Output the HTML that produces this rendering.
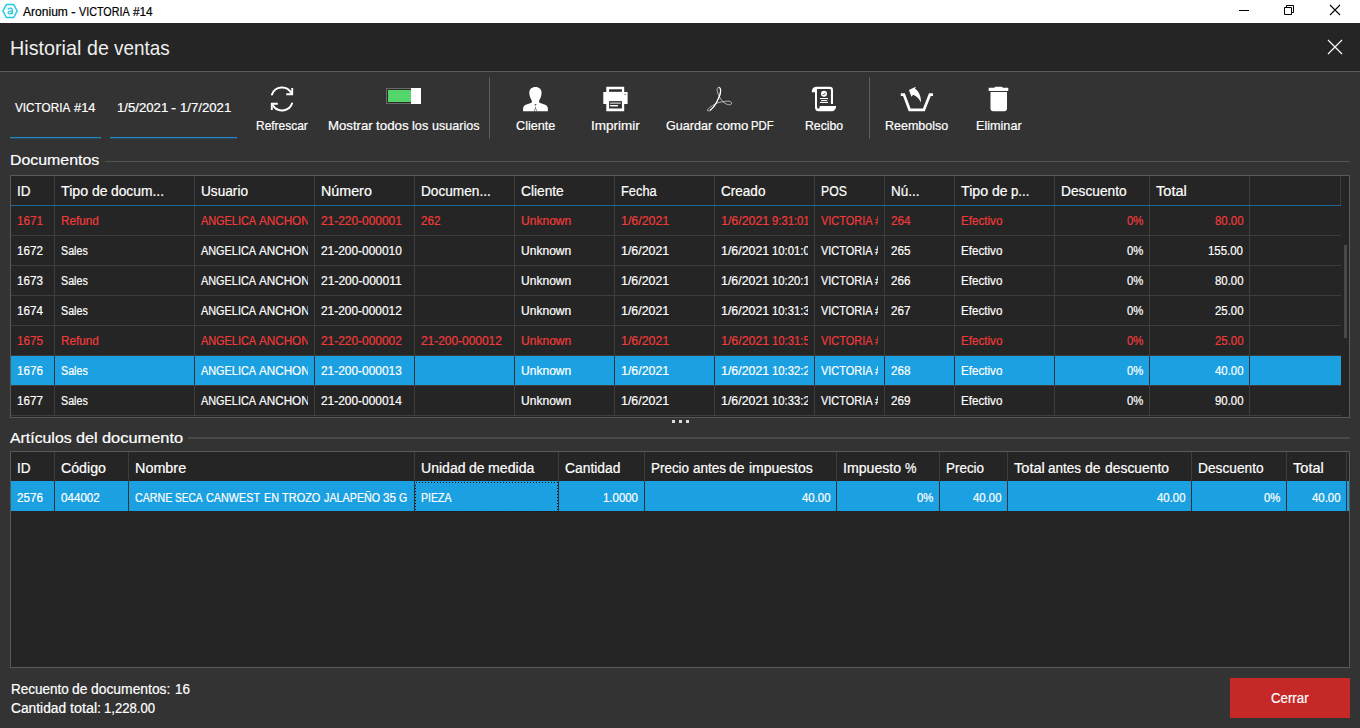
<!DOCTYPE html>
<html><head><meta charset="utf-8"><title>Aronium - VICTORIA #14</title>
<style>
html,body{margin:0;padding:0;background:#333;}
body{width:1360px;height:728px;position:relative;overflow:hidden;font-family:"Liberation Sans",sans-serif;}
.t{position:absolute;white-space:nowrap;line-height:1;transform-origin:0 0;display:block;-webkit-text-stroke:0.2px currentColor;}
.r{position:absolute;box-sizing:border-box;}
.clip{position:absolute;overflow:hidden;}
svg{position:absolute;overflow:visible;}
</style></head><body>
<div class="r" style="left:0px;top:0px;width:1360px;height:23px;background:#ffffff;"></div>
<span class="t" style="left:23.30px;top:6.04px;font-size:12px;color:#000;transform:scaleX(1.0046);">Aronium</span>
<span class="t" style="left:71.41px;top:6.04px;font-size:12px;color:#000;transform:scaleX(1.1782);">-</span>
<span class="t" style="left:79.35px;top:6.04px;font-size:12px;color:#000;transform:scaleX(0.8953);">VICTORIA</span>
<span class="t" style="left:133.12px;top:6.04px;font-size:12px;color:#000;transform:scaleX(0.9820);">#14</span>
<div class="r" style="left:0px;top:23px;width:1360px;height:48px;background:#252525;"></div>
<div class="r" style="left:0px;top:71px;width:1360px;height:1px;background:#585d56;"></div>
<span class="t" style="left:10.20px;top:38.09px;font-size:20.8px;color:#efefef;transform:scaleX(0.9506);-webkit-text-stroke:0;">Historial</span>
<span class="t" style="left:86.99px;top:38.09px;font-size:20.8px;color:#efefef;transform:scaleX(0.9416);-webkit-text-stroke:0;">de</span>
<span class="t" style="left:114.14px;top:38.09px;font-size:20.8px;color:#efefef;transform:scaleX(0.9086);-webkit-text-stroke:0;">ventas</span>
<div class="r" style="left:0px;top:72px;width:1360px;height:656px;background:#333333;"></div>
<span class="t" style="left:15.20px;top:101.20px;font-size:13px;color:#fff;transform:scaleX(0.9046);">VICTORIA</span>
<span class="t" style="left:74.06px;top:101.20px;font-size:13px;color:#fff;transform:scaleX(0.9922);">#14</span>
<span class="t" style="left:116.60px;top:101.20px;font-size:13px;color:#fff;transform:scaleX(1.0125);">1/5/2021</span>
<span class="t" style="left:171.33px;top:101.20px;font-size:13px;color:#fff;transform:scaleX(1.1791);">-</span>
<span class="t" style="left:179.93px;top:101.20px;font-size:13px;color:#fff;transform:scaleX(1.0125);">1/7/2021</span>
<div class="r" style="left:10px;top:137px;width:91px;height:1px;background:#2088c2;"></div>
<div class="r" style="left:10px;top:138px;width:91px;height:1px;background:#2c4a5e;"></div>
<div class="r" style="left:110px;top:137px;width:127px;height:1px;background:#2088c2;"></div>
<div class="r" style="left:110px;top:138px;width:127px;height:1px;background:#2c4a5e;"></div>
<span class="t" style="left:256.40px;top:119.30px;font-size:13px;color:#fff;transform:scaleX(0.9192);">Refrescar</span>
<span class="t" style="left:327.80px;top:119.30px;font-size:13px;color:#fff;transform:scaleX(1.0144);">Mostrar</span>
<span class="t" style="left:376.04px;top:119.30px;font-size:13px;color:#fff;transform:scaleX(1.0276);">todos</span>
<span class="t" style="left:412.27px;top:119.30px;font-size:13px;color:#fff;transform:scaleX(0.9761);">los</span>
<span class="t" style="left:432.04px;top:119.30px;font-size:13px;color:#fff;transform:scaleX(0.9658);">usuarios</span>
<span class="t" style="left:515.80px;top:119.30px;font-size:13px;color:#fff;transform:scaleX(0.9730);">Cliente</span>
<span class="t" style="left:591.30px;top:119.30px;font-size:13px;color:#fff;transform:scaleX(1.0377);">Imprimir</span>
<span class="t" style="left:665.80px;top:119.30px;font-size:13px;color:#fff;transform:scaleX(0.9678);">Guardar</span>
<span class="t" style="left:715.51px;top:119.30px;font-size:13px;color:#fff;transform:scaleX(1.0196);">como</span>
<span class="t" style="left:751.49px;top:119.30px;font-size:13px;color:#fff;transform:scaleX(0.8735);">PDF</span>
<span class="t" style="left:805.00px;top:119.30px;font-size:13px;color:#fff;transform:scaleX(0.9433);">Recibo</span>
<span class="t" style="left:885.40px;top:119.30px;font-size:13px;color:#fff;transform:scaleX(0.9608);">Reembolso</span>
<span class="t" style="left:976.40px;top:119.30px;font-size:13px;color:#fff;transform:scaleX(0.9717);">Eliminar</span>
<div class="r" style="left:489px;top:77px;width:1px;height:62px;background:#585d56;"></div>
<div class="r" style="left:869px;top:77px;width:1px;height:62px;background:#585d56;"></div>
<div class="r" style="left:386px;top:88px;width:35px;height:16px;background:#676c64;"></div>
<div class="r" style="left:387px;top:89px;width:24px;height:14px;background:#2b272a;"></div>
<div class="r" style="left:388px;top:90px;width:23px;height:12px;background:#52d66b;"></div>
<div class="r" style="left:411px;top:88px;width:10px;height:16px;background:#ffffff;"></div>
<span class="t" style="left:10.40px;top:152.10px;font-size:15px;color:#fff;transform:scaleX(1.0591);">Documentos</span>
<div class="r" style="left:105px;top:161px;width:1245px;height:1px;background:#50554e;"></div>
<span class="t" style="left:9.90px;top:429.60px;font-size:15px;color:#fff;transform:scaleX(1.0559);">Artículos</span>
<span class="t" style="left:75.90px;top:429.60px;font-size:15px;color:#fff;transform:scaleX(1.0808);">del</span>
<span class="t" style="left:101.91px;top:429.60px;font-size:15px;color:#fff;transform:scaleX(1.0934);">documento</span>
<div class="r" style="left:188px;top:437px;width:1162px;height:2px;background:#474a45;"></div>
<div class="r" style="left:672px;top:420px;width:3px;height:3px;background:#dddddd;"></div>
<div class="r" style="left:679px;top:420px;width:3px;height:3px;background:#dddddd;"></div>
<div class="r" style="left:686px;top:420px;width:3px;height:3px;background:#dddddd;"></div>
<div class="r" style="left:10px;top:175px;width:1340px;height:243px;background:#575c55;"></div>
<div class="r" style="left:11px;top:176px;width:1338px;height:241px;background:#252525;"></div>
<div class="r" style="left:54px;top:176px;width:1px;height:240px;background:#3b3e3a;"></div>
<div class="r" style="left:194px;top:176px;width:1px;height:240px;background:#3b3e3a;"></div>
<div class="r" style="left:314px;top:176px;width:1px;height:240px;background:#3b3e3a;"></div>
<div class="r" style="left:414px;top:176px;width:1px;height:240px;background:#3b3e3a;"></div>
<div class="r" style="left:514px;top:176px;width:1px;height:240px;background:#3b3e3a;"></div>
<div class="r" style="left:614px;top:176px;width:1px;height:240px;background:#3b3e3a;"></div>
<div class="r" style="left:714px;top:176px;width:1px;height:240px;background:#3b3e3a;"></div>
<div class="r" style="left:814px;top:176px;width:1px;height:240px;background:#3b3e3a;"></div>
<div class="r" style="left:884px;top:176px;width:1px;height:240px;background:#3b3e3a;"></div>
<div class="r" style="left:954px;top:176px;width:1px;height:240px;background:#3b3e3a;"></div>
<div class="r" style="left:1054px;top:176px;width:1px;height:240px;background:#3b3e3a;"></div>
<div class="r" style="left:1149px;top:176px;width:1px;height:240px;background:#3b3e3a;"></div>
<div class="r" style="left:1249px;top:176px;width:1px;height:240px;background:#3b3e3a;"></div>
<div class="r" style="left:1340px;top:176px;width:1px;height:29px;background:#3b3e3a;"></div>
<div class="r" style="left:11px;top:205px;width:1330px;height:1px;background:#1c6796;"></div>
<div class="r" style="left:11px;top:235px;width:1330px;height:1px;background:#3b3e3a;"></div>
<div class="r" style="left:11px;top:265px;width:1330px;height:1px;background:#3b3e3a;"></div>
<div class="r" style="left:11px;top:295px;width:1330px;height:1px;background:#3b3e3a;"></div>
<div class="r" style="left:11px;top:325px;width:1330px;height:1px;background:#3b3e3a;"></div>
<div class="r" style="left:11px;top:355px;width:1330px;height:1px;background:#3b3e3a;"></div>
<div class="r" style="left:11px;top:385px;width:1330px;height:1px;background:#3b3e3a;"></div>
<div class="r" style="left:11px;top:415px;width:1330px;height:1px;background:#3b3e3a;"></div>
<div class="r" style="left:11px;top:356px;width:1330px;height:29px;background:#1ba1e2;"></div>
<div class="r" style="left:54px;top:356px;width:1px;height:29px;background:#2d3234;"></div>
<div class="r" style="left:194px;top:356px;width:1px;height:29px;background:#2d3234;"></div>
<div class="r" style="left:314px;top:356px;width:1px;height:29px;background:#2d3234;"></div>
<div class="r" style="left:414px;top:356px;width:1px;height:29px;background:#2d3234;"></div>
<div class="r" style="left:514px;top:356px;width:1px;height:29px;background:#2d3234;"></div>
<div class="r" style="left:614px;top:356px;width:1px;height:29px;background:#2d3234;"></div>
<div class="r" style="left:714px;top:356px;width:1px;height:29px;background:#2d3234;"></div>
<div class="r" style="left:814px;top:356px;width:1px;height:29px;background:#2d3234;"></div>
<div class="r" style="left:884px;top:356px;width:1px;height:29px;background:#2d3234;"></div>
<div class="r" style="left:954px;top:356px;width:1px;height:29px;background:#2d3234;"></div>
<div class="r" style="left:1054px;top:356px;width:1px;height:29px;background:#2d3234;"></div>
<div class="r" style="left:1149px;top:356px;width:1px;height:29px;background:#2d3234;"></div>
<div class="r" style="left:1249px;top:356px;width:1px;height:29px;background:#2d3234;"></div>
<div class="r" style="left:1344px;top:245px;width:3px;height:93px;background:#494949;"></div>
<span class="t" style="left:16.60px;top:184.35px;font-size:14px;color:#fff;transform:scaleX(0.9673);">ID</span>
<span class="t" style="left:60.60px;top:184.35px;font-size:14px;color:#fff;transform:scaleX(1.0166);">Tipo</span>
<span class="t" style="left:91.59px;top:184.35px;font-size:14px;color:#fff;transform:scaleX(0.9986);">de</span>
<span class="t" style="left:110.98px;top:184.35px;font-size:14px;color:#fff;transform:scaleX(0.9869);">docum...</span>
<span class="t" style="left:200.60px;top:184.35px;font-size:14px;color:#fff;transform:scaleX(0.9752);">Usuario</span>
<span class="t" style="left:320.60px;top:184.35px;font-size:14px;color:#fff;transform:scaleX(1.0207);">Número</span>
<span class="t" style="left:420.60px;top:184.35px;font-size:14px;color:#fff;transform:scaleX(0.9752);">Documen...</span>
<span class="t" style="left:520.60px;top:184.35px;font-size:14px;color:#fff;transform:scaleX(0.9810);">Cliente</span>
<span class="t" style="left:620.60px;top:184.35px;font-size:14px;color:#fff;transform:scaleX(0.9163);">Fecha</span>
<span class="t" style="left:720.60px;top:184.35px;font-size:14px;color:#fff;transform:scaleX(0.9672);">Creado</span>
<span class="t" style="left:820.60px;top:184.35px;font-size:14px;color:#fff;transform:scaleX(0.8730);">POS</span>
<span class="t" style="left:890.60px;top:184.35px;font-size:14px;color:#fff;transform:scaleX(0.9639);">Nú...</span>
<span class="t" style="left:960.60px;top:184.35px;font-size:14px;color:#fff;transform:scaleX(1.0166);">Tipo</span>
<span class="t" style="left:991.59px;top:184.35px;font-size:14px;color:#fff;transform:scaleX(0.9986);">de</span>
<span class="t" style="left:1010.98px;top:184.35px;font-size:14px;color:#fff;transform:scaleX(0.9431);">p...</span>
<span class="t" style="left:1060.60px;top:184.35px;font-size:14px;color:#fff;transform:scaleX(0.9808);">Descuento</span>
<span class="t" style="left:1155.60px;top:184.35px;font-size:14px;color:#fff;transform:scaleX(1.0414);">Total</span>
<span class="t" style="left:17.30px;top:214.84px;font-size:12px;color:#f03a3a;transform:scaleX(0.9692);">1671</span>
<span class="t" style="left:60.60px;top:214.84px;font-size:12px;color:#f03a3a;transform:scaleX(0.9776);">Refund</span>
<div class="clip" style="left:195px;top:212.84px;width:113px;height:19.6px"><span class="t" style="left:5.60px;top:2px;font-size:12px;color:#f03a3a;transform:scaleX(0.9067);">ANGELICA</span><span class="t" style="left:63.91px;top:2px;font-size:12px;color:#f03a3a;transform:scaleX(0.9733);">ANCHONDO</span></div>
<span class="t" style="left:320.60px;top:214.84px;font-size:12px;color:#f03a3a;transform:scaleX(0.9920);">21-220-000001</span>
<span class="t" style="left:420.60px;top:214.84px;font-size:12px;color:#f03a3a;transform:scaleX(0.9692);">262</span>
<span class="t" style="left:520.60px;top:214.84px;font-size:12px;color:#f03a3a;transform:scaleX(1.0044);">Unknown</span>
<span class="t" style="left:620.60px;top:214.84px;font-size:12px;color:#f03a3a;transform:scaleX(1.0311);">1/6/2021</span>
<div class="clip" style="left:715px;top:212.84px;width:93px;height:19.6px"><span class="t" style="left:5.60px;top:2px;font-size:12px;color:#f03a3a;transform:scaleX(1.0311);">1/6/2021</span><span class="t" style="left:57.05px;top:2px;font-size:12px;color:#f03a3a;transform:scaleX(0.9378);">9:31:01</span></div>
<div class="clip" style="left:815px;top:212.84px;width:63px;height:19.6px"><span class="t" style="left:5.60px;top:2px;font-size:12px;color:#f03a3a;transform:scaleX(0.9125);">VICTORIA</span><span class="t" style="left:60.40px;top:2px;font-size:12px;color:#f03a3a;transform:scaleX(1.0008);">#14</span></div>
<span class="t" style="left:890.60px;top:214.84px;font-size:12px;color:#f03a3a;transform:scaleX(0.9692);">264</span>
<span class="t" style="left:960.60px;top:214.84px;font-size:12px;color:#f03a3a;transform:scaleX(0.9698);">Efectivo</span>
<span class="t" style="left:1126.71px;top:214.84px;font-size:12px;color:#f03a3a;transform:scaleX(0.9392);">0%</span>
<span class="t" style="left:1214.92px;top:214.84px;font-size:12px;color:#f03a3a;transform:scaleX(0.9483);">80.00</span>
<span class="t" style="left:17.30px;top:244.84px;font-size:12px;color:#fff;transform:scaleX(0.9692);">1672</span>
<span class="t" style="left:60.60px;top:244.84px;font-size:12px;color:#fff;transform:scaleX(0.8910);">Sales</span>
<div class="clip" style="left:195px;top:242.84px;width:113px;height:19.6px"><span class="t" style="left:5.60px;top:2px;font-size:12px;color:#fff;transform:scaleX(0.9067);">ANGELICA</span><span class="t" style="left:63.91px;top:2px;font-size:12px;color:#fff;transform:scaleX(0.9733);">ANCHONDO</span></div>
<span class="t" style="left:320.60px;top:244.84px;font-size:12px;color:#fff;transform:scaleX(0.9920);">21-200-000010</span>
<span class="t" style="left:520.60px;top:244.84px;font-size:12px;color:#fff;transform:scaleX(1.0044);">Unknown</span>
<span class="t" style="left:620.60px;top:244.84px;font-size:12px;color:#fff;transform:scaleX(1.0311);">1/6/2021</span>
<div class="clip" style="left:715px;top:242.84px;width:93px;height:19.6px"><span class="t" style="left:5.60px;top:2px;font-size:12px;color:#fff;transform:scaleX(1.0311);">1/6/2021</span><span class="t" style="left:57.05px;top:2px;font-size:12px;color:#fff;transform:scaleX(0.9423);">10:01:08</span></div>
<div class="clip" style="left:815px;top:242.84px;width:63px;height:19.6px"><span class="t" style="left:5.60px;top:2px;font-size:12px;color:#fff;transform:scaleX(0.9125);">VICTORIA</span><span class="t" style="left:60.40px;top:2px;font-size:12px;color:#fff;transform:scaleX(1.0008);">#14</span></div>
<span class="t" style="left:890.60px;top:244.84px;font-size:12px;color:#fff;transform:scaleX(0.9692);">265</span>
<span class="t" style="left:960.60px;top:244.84px;font-size:12px;color:#fff;transform:scaleX(0.9698);">Efectivo</span>
<span class="t" style="left:1126.71px;top:244.84px;font-size:12px;color:#fff;transform:scaleX(0.9392);">0%</span>
<span class="t" style="left:1208.45px;top:244.84px;font-size:12px;color:#fff;transform:scaleX(0.9521);">155.00</span>
<span class="t" style="left:17.30px;top:274.84px;font-size:12px;color:#fff;transform:scaleX(0.9692);">1673</span>
<span class="t" style="left:60.60px;top:274.84px;font-size:12px;color:#fff;transform:scaleX(0.8910);">Sales</span>
<div class="clip" style="left:195px;top:272.84px;width:113px;height:19.6px"><span class="t" style="left:5.60px;top:2px;font-size:12px;color:#fff;transform:scaleX(0.9067);">ANGELICA</span><span class="t" style="left:63.91px;top:2px;font-size:12px;color:#fff;transform:scaleX(0.9733);">ANCHONDO</span></div>
<span class="t" style="left:320.60px;top:274.84px;font-size:12px;color:#fff;transform:scaleX(1.0029);">21-200-000011</span>
<span class="t" style="left:520.60px;top:274.84px;font-size:12px;color:#fff;transform:scaleX(1.0044);">Unknown</span>
<span class="t" style="left:620.60px;top:274.84px;font-size:12px;color:#fff;transform:scaleX(1.0311);">1/6/2021</span>
<div class="clip" style="left:715px;top:272.84px;width:93px;height:19.6px"><span class="t" style="left:5.60px;top:2px;font-size:12px;color:#fff;transform:scaleX(1.0311);">1/6/2021</span><span class="t" style="left:57.05px;top:2px;font-size:12px;color:#fff;transform:scaleX(0.9423);">10:20:15</span></div>
<div class="clip" style="left:815px;top:272.84px;width:63px;height:19.6px"><span class="t" style="left:5.60px;top:2px;font-size:12px;color:#fff;transform:scaleX(0.9125);">VICTORIA</span><span class="t" style="left:60.40px;top:2px;font-size:12px;color:#fff;transform:scaleX(1.0008);">#14</span></div>
<span class="t" style="left:890.60px;top:274.84px;font-size:12px;color:#fff;transform:scaleX(0.9692);">266</span>
<span class="t" style="left:960.60px;top:274.84px;font-size:12px;color:#fff;transform:scaleX(0.9698);">Efectivo</span>
<span class="t" style="left:1126.71px;top:274.84px;font-size:12px;color:#fff;transform:scaleX(0.9392);">0%</span>
<span class="t" style="left:1214.92px;top:274.84px;font-size:12px;color:#fff;transform:scaleX(0.9483);">80.00</span>
<span class="t" style="left:17.30px;top:304.84px;font-size:12px;color:#fff;transform:scaleX(0.9692);">1674</span>
<span class="t" style="left:60.60px;top:304.84px;font-size:12px;color:#fff;transform:scaleX(0.8910);">Sales</span>
<div class="clip" style="left:195px;top:302.84px;width:113px;height:19.6px"><span class="t" style="left:5.60px;top:2px;font-size:12px;color:#fff;transform:scaleX(0.9067);">ANGELICA</span><span class="t" style="left:63.91px;top:2px;font-size:12px;color:#fff;transform:scaleX(0.9733);">ANCHONDO</span></div>
<span class="t" style="left:320.60px;top:304.84px;font-size:12px;color:#fff;transform:scaleX(0.9920);">21-200-000012</span>
<span class="t" style="left:520.60px;top:304.84px;font-size:12px;color:#fff;transform:scaleX(1.0044);">Unknown</span>
<span class="t" style="left:620.60px;top:304.84px;font-size:12px;color:#fff;transform:scaleX(1.0311);">1/6/2021</span>
<div class="clip" style="left:715px;top:302.84px;width:93px;height:19.6px"><span class="t" style="left:5.60px;top:2px;font-size:12px;color:#fff;transform:scaleX(1.0311);">1/6/2021</span><span class="t" style="left:57.05px;top:2px;font-size:12px;color:#fff;transform:scaleX(0.9423);">10:31:38</span></div>
<div class="clip" style="left:815px;top:302.84px;width:63px;height:19.6px"><span class="t" style="left:5.60px;top:2px;font-size:12px;color:#fff;transform:scaleX(0.9125);">VICTORIA</span><span class="t" style="left:60.40px;top:2px;font-size:12px;color:#fff;transform:scaleX(1.0008);">#14</span></div>
<span class="t" style="left:890.60px;top:304.84px;font-size:12px;color:#fff;transform:scaleX(0.9692);">267</span>
<span class="t" style="left:960.60px;top:304.84px;font-size:12px;color:#fff;transform:scaleX(0.9698);">Efectivo</span>
<span class="t" style="left:1126.71px;top:304.84px;font-size:12px;color:#fff;transform:scaleX(0.9392);">0%</span>
<span class="t" style="left:1214.92px;top:304.84px;font-size:12px;color:#fff;transform:scaleX(0.9483);">25.00</span>
<span class="t" style="left:17.30px;top:334.84px;font-size:12px;color:#f03a3a;transform:scaleX(0.9692);">1675</span>
<span class="t" style="left:60.60px;top:334.84px;font-size:12px;color:#f03a3a;transform:scaleX(0.9776);">Refund</span>
<div class="clip" style="left:195px;top:332.84px;width:113px;height:19.6px"><span class="t" style="left:5.60px;top:2px;font-size:12px;color:#f03a3a;transform:scaleX(0.9067);">ANGELICA</span><span class="t" style="left:63.91px;top:2px;font-size:12px;color:#f03a3a;transform:scaleX(0.9733);">ANCHONDO</span></div>
<span class="t" style="left:320.60px;top:334.84px;font-size:12px;color:#f03a3a;transform:scaleX(0.9920);">21-220-000002</span>
<span class="t" style="left:420.60px;top:334.84px;font-size:12px;color:#f03a3a;transform:scaleX(0.9920);">21-200-000012</span>
<span class="t" style="left:520.60px;top:334.84px;font-size:12px;color:#f03a3a;transform:scaleX(1.0044);">Unknown</span>
<span class="t" style="left:620.60px;top:334.84px;font-size:12px;color:#f03a3a;transform:scaleX(1.0311);">1/6/2021</span>
<div class="clip" style="left:715px;top:332.84px;width:93px;height:19.6px"><span class="t" style="left:5.60px;top:2px;font-size:12px;color:#f03a3a;transform:scaleX(1.0311);">1/6/2021</span><span class="t" style="left:57.05px;top:2px;font-size:12px;color:#f03a3a;transform:scaleX(0.9423);">10:31:58</span></div>
<div class="clip" style="left:815px;top:332.84px;width:63px;height:19.6px"><span class="t" style="left:5.60px;top:2px;font-size:12px;color:#f03a3a;transform:scaleX(0.9125);">VICTORIA</span><span class="t" style="left:60.40px;top:2px;font-size:12px;color:#f03a3a;transform:scaleX(1.0008);">#14</span></div>
<span class="t" style="left:960.60px;top:334.84px;font-size:12px;color:#f03a3a;transform:scaleX(0.9698);">Efectivo</span>
<span class="t" style="left:1126.71px;top:334.84px;font-size:12px;color:#f03a3a;transform:scaleX(0.9392);">0%</span>
<span class="t" style="left:1214.92px;top:334.84px;font-size:12px;color:#f03a3a;transform:scaleX(0.9483);">25.00</span>
<span class="t" style="left:17.30px;top:364.84px;font-size:12px;color:#fff;transform:scaleX(0.9692);">1676</span>
<span class="t" style="left:60.60px;top:364.84px;font-size:12px;color:#fff;transform:scaleX(0.8910);">Sales</span>
<div class="clip" style="left:195px;top:362.84px;width:113px;height:19.6px"><span class="t" style="left:5.60px;top:2px;font-size:12px;color:#fff;transform:scaleX(0.9067);">ANGELICA</span><span class="t" style="left:63.91px;top:2px;font-size:12px;color:#fff;transform:scaleX(0.9733);">ANCHONDO</span></div>
<span class="t" style="left:320.60px;top:364.84px;font-size:12px;color:#fff;transform:scaleX(0.9920);">21-200-000013</span>
<span class="t" style="left:520.60px;top:364.84px;font-size:12px;color:#fff;transform:scaleX(1.0044);">Unknown</span>
<span class="t" style="left:620.60px;top:364.84px;font-size:12px;color:#fff;transform:scaleX(1.0311);">1/6/2021</span>
<div class="clip" style="left:715px;top:362.84px;width:93px;height:19.6px"><span class="t" style="left:5.60px;top:2px;font-size:12px;color:#fff;transform:scaleX(1.0311);">1/6/2021</span><span class="t" style="left:57.05px;top:2px;font-size:12px;color:#fff;transform:scaleX(0.9423);">10:32:22</span></div>
<div class="clip" style="left:815px;top:362.84px;width:63px;height:19.6px"><span class="t" style="left:5.60px;top:2px;font-size:12px;color:#fff;transform:scaleX(0.9125);">VICTORIA</span><span class="t" style="left:60.40px;top:2px;font-size:12px;color:#fff;transform:scaleX(1.0008);">#14</span></div>
<span class="t" style="left:890.60px;top:364.84px;font-size:12px;color:#fff;transform:scaleX(0.9692);">268</span>
<span class="t" style="left:960.60px;top:364.84px;font-size:12px;color:#fff;transform:scaleX(0.9698);">Efectivo</span>
<span class="t" style="left:1126.71px;top:364.84px;font-size:12px;color:#fff;transform:scaleX(0.9392);">0%</span>
<span class="t" style="left:1214.92px;top:364.84px;font-size:12px;color:#fff;transform:scaleX(0.9483);">40.00</span>
<span class="t" style="left:17.30px;top:394.84px;font-size:12px;color:#fff;transform:scaleX(0.9692);">1677</span>
<span class="t" style="left:60.60px;top:394.84px;font-size:12px;color:#fff;transform:scaleX(0.8910);">Sales</span>
<div class="clip" style="left:195px;top:392.84px;width:113px;height:19.6px"><span class="t" style="left:5.60px;top:2px;font-size:12px;color:#fff;transform:scaleX(0.9067);">ANGELICA</span><span class="t" style="left:63.91px;top:2px;font-size:12px;color:#fff;transform:scaleX(0.9733);">ANCHONDO</span></div>
<span class="t" style="left:320.60px;top:394.84px;font-size:12px;color:#fff;transform:scaleX(0.9920);">21-200-000014</span>
<span class="t" style="left:520.60px;top:394.84px;font-size:12px;color:#fff;transform:scaleX(1.0044);">Unknown</span>
<span class="t" style="left:620.60px;top:394.84px;font-size:12px;color:#fff;transform:scaleX(1.0311);">1/6/2021</span>
<div class="clip" style="left:715px;top:392.84px;width:93px;height:19.6px"><span class="t" style="left:5.60px;top:2px;font-size:12px;color:#fff;transform:scaleX(1.0311);">1/6/2021</span><span class="t" style="left:57.05px;top:2px;font-size:12px;color:#fff;transform:scaleX(0.9423);">10:33:25</span></div>
<div class="clip" style="left:815px;top:392.84px;width:63px;height:19.6px"><span class="t" style="left:5.60px;top:2px;font-size:12px;color:#fff;transform:scaleX(0.9125);">VICTORIA</span><span class="t" style="left:60.40px;top:2px;font-size:12px;color:#fff;transform:scaleX(1.0008);">#14</span></div>
<span class="t" style="left:890.60px;top:394.84px;font-size:12px;color:#fff;transform:scaleX(0.9692);">269</span>
<span class="t" style="left:960.60px;top:394.84px;font-size:12px;color:#fff;transform:scaleX(0.9698);">Efectivo</span>
<span class="t" style="left:1126.71px;top:394.84px;font-size:12px;color:#fff;transform:scaleX(0.9392);">0%</span>
<span class="t" style="left:1214.92px;top:394.84px;font-size:12px;color:#fff;transform:scaleX(0.9483);">90.00</span>
<div class="r" style="left:10px;top:451px;width:1340px;height:217px;background:#575c55;"></div>
<div class="r" style="left:11px;top:452px;width:1338px;height:215px;background:#252525;"></div>
<div class="r" style="left:54px;top:452px;width:1px;height:29px;background:#3b3e3a;"></div>
<div class="r" style="left:128px;top:452px;width:1px;height:29px;background:#3b3e3a;"></div>
<div class="r" style="left:414px;top:452px;width:1px;height:29px;background:#3b3e3a;"></div>
<div class="r" style="left:558px;top:452px;width:1px;height:29px;background:#3b3e3a;"></div>
<div class="r" style="left:644px;top:452px;width:1px;height:29px;background:#3b3e3a;"></div>
<div class="r" style="left:836px;top:452px;width:1px;height:29px;background:#3b3e3a;"></div>
<div class="r" style="left:939px;top:452px;width:1px;height:29px;background:#3b3e3a;"></div>
<div class="r" style="left:1007px;top:452px;width:1px;height:29px;background:#3b3e3a;"></div>
<div class="r" style="left:1191px;top:452px;width:1px;height:29px;background:#3b3e3a;"></div>
<div class="r" style="left:1286px;top:452px;width:1px;height:29px;background:#3b3e3a;"></div>
<div class="r" style="left:1346px;top:452px;width:1px;height:29px;background:#3b3e3a;"></div>
<div class="r" style="left:11px;top:481px;width:1338px;height:30px;background:#1ba1e2;"></div>
<div class="r" style="left:54px;top:481px;width:1px;height:30px;background:#2d3234;"></div>
<div class="r" style="left:128px;top:481px;width:1px;height:30px;background:#2d3234;"></div>
<div class="r" style="left:414px;top:481px;width:1px;height:30px;background:#2d3234;"></div>
<div class="r" style="left:558px;top:481px;width:1px;height:30px;background:#2d3234;"></div>
<div class="r" style="left:644px;top:481px;width:1px;height:30px;background:#2d3234;"></div>
<div class="r" style="left:836px;top:481px;width:1px;height:30px;background:#2d3234;"></div>
<div class="r" style="left:939px;top:481px;width:1px;height:30px;background:#2d3234;"></div>
<div class="r" style="left:1007px;top:481px;width:1px;height:30px;background:#2d3234;"></div>
<div class="r" style="left:1191px;top:481px;width:1px;height:30px;background:#2d3234;"></div>
<div class="r" style="left:1286px;top:481px;width:1px;height:30px;background:#2d3234;"></div>
<div class="r" style="left:1346px;top:481px;width:1px;height:30px;background:#2d3234;"></div>
<svg width="150" height="36" style="left:410px;top:478px" shape-rendering="crispEdges"><rect x="5.5" y="4.5" width="142" height="29" fill="none" stroke="#101418" stroke-width="1" stroke-dasharray="1 2"/></svg>
<span class="t" style="left:16.60px;top:461.15px;font-size:14px;color:#fff;transform:scaleX(0.9673);">ID</span>
<span class="t" style="left:60.60px;top:461.15px;font-size:14px;color:#fff;transform:scaleX(1.0126);">Código</span>
<span class="t" style="left:134.60px;top:461.15px;font-size:14px;color:#fff;transform:scaleX(1.0270);">Nombre</span>
<span class="t" style="left:420.60px;top:461.15px;font-size:14px;color:#fff;transform:scaleX(1.0029);">Unidad</span>
<span class="t" style="left:468.93px;top:461.15px;font-size:14px;color:#fff;transform:scaleX(0.9986);">de</span>
<span class="t" style="left:488.32px;top:461.15px;font-size:14px;color:#fff;transform:scaleX(1.0093);">medida</span>
<span class="t" style="left:564.60px;top:461.15px;font-size:14px;color:#fff;transform:scaleX(0.9890);">Cantidad</span>
<span class="t" style="left:650.60px;top:461.15px;font-size:14px;color:#fff;transform:scaleX(0.9595);">Precio</span>
<span class="t" style="left:692.51px;top:461.15px;font-size:14px;color:#fff;transform:scaleX(0.9649);">antes</span>
<span class="t" style="left:729.39px;top:461.15px;font-size:14px;color:#fff;transform:scaleX(0.9986);">de</span>
<span class="t" style="left:748.78px;top:461.15px;font-size:14px;color:#fff;transform:scaleX(0.9989);">impuestos</span>
<span class="t" style="left:842.60px;top:461.15px;font-size:14px;color:#fff;transform:scaleX(1.0095);">Impuesto</span>
<span class="t" style="left:904.57px;top:461.15px;font-size:14px;color:#fff;transform:scaleX(0.9204);">%</span>
<span class="t" style="left:945.60px;top:461.15px;font-size:14px;color:#fff;transform:scaleX(0.9595);">Precio</span>
<span class="t" style="left:1013.60px;top:461.15px;font-size:14px;color:#fff;transform:scaleX(1.0414);">Total</span>
<span class="t" style="left:1048.23px;top:461.15px;font-size:14px;color:#fff;transform:scaleX(0.9649);">antes</span>
<span class="t" style="left:1085.11px;top:461.15px;font-size:14px;color:#fff;transform:scaleX(0.9986);">de</span>
<span class="t" style="left:1104.50px;top:461.15px;font-size:14px;color:#fff;transform:scaleX(0.9915);">descuento</span>
<span class="t" style="left:1197.60px;top:461.15px;font-size:14px;color:#fff;transform:scaleX(0.9808);">Descuento</span>
<span class="t" style="left:1292.60px;top:461.15px;font-size:14px;color:#fff;transform:scaleX(1.0414);">Total</span>
<span class="t" style="left:17.30px;top:491.84px;font-size:12px;color:#fff;transform:scaleX(0.9692);">2576</span>
<span class="t" style="left:60.60px;top:491.84px;font-size:12px;color:#fff;transform:scaleX(0.9692);">044002</span>
<span class="t" style="left:134.60px;top:491.84px;font-size:12px;color:#fff;transform:scaleX(0.8899);">CARNE</span>
<span class="t" style="left:175.27px;top:491.84px;font-size:12px;color:#fff;transform:scaleX(0.8449);">SECA</span>
<span class="t" style="left:206.17px;top:491.84px;font-size:12px;color:#fff;transform:scaleX(0.9009);">CANWEST</span>
<span class="t" style="left:263.51px;top:491.84px;font-size:12px;color:#fff;transform:scaleX(0.9022);">EN</span>
<span class="t" style="left:281.83px;top:491.84px;font-size:12px;color:#fff;transform:scaleX(0.9143);">TROZO</span>
<span class="t" style="left:323.52px;top:491.84px;font-size:12px;color:#fff;transform:scaleX(0.8965);">JALAPEÑO</span>
<span class="t" style="left:383.01px;top:491.84px;font-size:12px;color:#fff;transform:scaleX(0.9692);">35</span>
<span class="t" style="left:399.23px;top:491.84px;font-size:12px;color:#fff;transform:scaleX(0.8820);">G</span>
<span class="t" style="left:420.60px;top:491.84px;font-size:12px;color:#fff;transform:scaleX(0.8812);">PIEZA</span>
<span class="t" style="left:603.45px;top:491.84px;font-size:12px;color:#fff;transform:scaleX(0.9521);">1.0000</span>
<span class="t" style="left:801.92px;top:491.84px;font-size:12px;color:#fff;transform:scaleX(0.9483);">40.00</span>
<span class="t" style="left:916.71px;top:491.84px;font-size:12px;color:#fff;transform:scaleX(0.9392);">0%</span>
<span class="t" style="left:972.92px;top:491.84px;font-size:12px;color:#fff;transform:scaleX(0.9483);">40.00</span>
<span class="t" style="left:1156.92px;top:491.84px;font-size:12px;color:#fff;transform:scaleX(0.9483);">40.00</span>
<span class="t" style="left:1263.71px;top:491.84px;font-size:12px;color:#fff;transform:scaleX(0.9392);">0%</span>
<span class="t" style="left:1311.92px;top:491.84px;font-size:12px;color:#fff;transform:scaleX(0.9483);">40.00</span>
<span class="t" style="left:10.60px;top:681.95px;font-size:14px;color:#fff;transform:scaleX(0.9645);">Recuento</span>
<span class="t" style="left:72.21px;top:681.95px;font-size:14px;color:#fff;transform:scaleX(0.9909);">de</span>
<span class="t" style="left:91.44px;top:681.95px;font-size:14px;color:#fff;transform:scaleX(0.9906);">documentos:</span>
<span class="t" style="left:174.66px;top:681.95px;font-size:14px;color:#fff;transform:scaleX(0.9617);">16</span>
<span class="t" style="left:10.60px;top:700.95px;font-size:14px;color:#fff;transform:scaleX(0.9841);">Cantidad</span>
<span class="t" style="left:69.57px;top:700.95px;font-size:14px;color:#fff;transform:scaleX(1.0242);">total:</span>
<span class="t" style="left:104.47px;top:700.95px;font-size:14px;color:#fff;transform:scaleX(0.9376);">1,228.00</span>
<div class="r" style="left:1230px;top:678px;width:120px;height:40px;background:#c62828;"></div>
<span class="t" style="left:1271.20px;top:690.75px;font-size:14px;color:#fff;transform:scaleX(0.9473);">Cerrar</span>
<svg width="1360" height="728" viewBox="0 0 1360 728" style="left:0;top:0;">
<polygon points="2.9,11 6.4,4.5 13.7,4.5 17.2,11 13.7,17.5 6.4,17.5" fill="none" stroke="#1fcbe0" stroke-width="1.55" stroke-linejoin="round"/>
<path d="M8.1 9.2C8.7 8.5 9.5 8.2 10.4 8.2C11.7 8.2 12.3 8.9 12.3 10.1V13.7M12.3 10.9L10.1 11.2C8.7 11.4 8 11.9 8 12.6C8 13.4 8.7 13.8 9.6 13.8C10.9 13.8 12.3 13.1 12.3 11.8" fill="none" stroke="#1fcbe0" stroke-width="1.2" stroke-linecap="round" stroke-linejoin="round"/>
<path d="M1239 10.5H1249" stroke="#000" stroke-width="1" fill="none"/>
<path d="M1284.5 7.5H1291.5V14.5H1284.5Z M1286.5 7.5V5.5H1293.5V12.5H1291.5" stroke="#000" stroke-width="1" fill="none"/>
<path d="M1330 5L1340 15M1340 5L1330 15" stroke="#000" stroke-width="1.1" fill="none"/>
<path d="M1328 40L1342 54M1342 40L1328 54" stroke="#fff" stroke-width="1.2" fill="none"/>
<path d="M271.9 94.6A10.7 10.7 0 0 1 291.4 93.2" fill="none" stroke="#fff" stroke-width="1.9" stroke-linecap="round"/><path d="M286.2 94.2H292.2V87.9" fill="none" stroke="#fff" stroke-width="1.9" stroke-linecap="butt" stroke-linejoin="miter"/>
<g transform="rotate(180 282 99)"><path d="M271.9 94.6A10.7 10.7 0 0 1 291.4 93.2" fill="none" stroke="#fff" stroke-width="1.9" stroke-linecap="round"/><path d="M286.2 94.2H292.2V87.9" fill="none" stroke="#fff" stroke-width="1.9" stroke-linecap="butt" stroke-linejoin="miter"/></g>
<path d="M535.4 86.9C539.2 86.9 541.7 89.3 541.6 92.7C541.5 96 540.4 98.4 539.2 100.4C538.8 101.4 539 102.5 540.2 103L545.2 104.8C547.2 105.6 547.9 107 547.9 109V111.2H523.1V109C523.1 107 523.8 105.6 525.8 104.8L530.8 103C532 102.5 532.2 101.4 531.7 100.4C530.5 98.4 529.4 96 529.3 92.7C529.2 89.3 531.7 86.9 535.4 86.9Z" fill="#fff"/>
<path d="M534.3 104.3H536.7L535.5 105.8Z" fill="#333"/><path d="M535.5 106.2L536.9 111.3H536.2L535.5 108L534.8 111.3H534.1Z" fill="#333" opacity="0.85"/>
<path d="M606.3 86.8H624.2V92H627.6V104H624.2V111.2H606.3V104H603.3V92H606.3Z" fill="#fff"/>
<rect x="609.1" y="89.3" width="12.8" height="2.5" fill="#2b2b2b"/>
<rect x="609.1" y="101.1" width="12.8" height="7.4" fill="#303030"/>
<rect x="610.1" y="102.5" width="10.7" height="1.3" fill="#c8c8c8"/>
<rect x="610.1" y="105" width="7.9" height="1.4" fill="#fff"/>
<rect x="624.6" y="93.9" width="1.1" height="1.1" fill="#444"/>
<path d="M717.20 90.40 C716.97 88.37 717.13 89.23 717.60 88.20 C718.07 87.17 717.83 87.33 718.60 87.30 C719.37 87.27 719.27 87.13 719.90 88.10 C720.53 89.07 720.40 88.40 720.50 90.20 C720.60 92.00 720.63 91.37 720.20 93.50 C719.77 95.63 720.03 94.43 719.20 96.60 C718.37 98.77 718.70 97.87 717.70 100.00 C716.70 102.13 717.57 100.67 716.20 103.00 C714.83 105.33 715.47 104.67 713.60 107.00 C711.73 109.33 712.33 108.73 710.60 110.00 C708.87 111.27 709.40 110.77 708.40 110.80 C707.40 110.83 707.57 110.83 707.60 110.10 C707.63 109.37 707.40 109.73 708.50 108.60 C709.60 107.47 709.17 107.93 710.90 106.70 C712.63 105.47 711.80 106.03 713.70 104.90 C715.60 103.77 714.57 104.17 716.60 103.30 C718.63 102.43 717.67 102.83 719.80 102.30 C721.93 101.77 720.77 102.03 723.00 101.70 C725.23 101.37 724.50 101.43 726.50 101.30 C728.50 101.17 727.50 101.00 729.00 101.30 C730.50 101.60 730.17 101.47 731.00 102.20 C731.83 102.93 731.73 102.73 731.50 103.50 C731.27 104.27 731.37 104.13 730.30 104.50 C729.23 104.87 729.67 104.80 728.30 104.60 C726.93 104.40 727.63 104.60 726.20 103.90 C724.77 103.20 725.43 103.67 724.00 102.50 C722.57 101.33 723.23 101.97 721.90 100.40 C720.57 98.83 721.20 99.83 720.00 97.80 C718.80 95.77 719.23 96.77 718.30 94.30 C717.37 91.83 717.43 92.43 717.20 90.40Z" fill="none" stroke="#d8d8d8" stroke-width="0.85" stroke-linejoin="round"/>
<path d="M719.6 87.6C720.7 88.6 720.7 91.5 720.2 93.8C719.5 97 717.8 100 716.2 103C714.5 106.2 712 108.8 710.4 110.1" fill="none" stroke="#ffffff" stroke-width="1.25" stroke-linecap="round"/>
<path d="M816 86.8H829.8C832 86.8 833 88 833 90V104H830.9V90.5C830.9 89.5 830.5 89.1 829.5 89.1H817V106.5C817 108 817.6 108.6 818.4 108.6C819.3 108.6 819.7 107.8 819.7 105.9H836.1C836.1 109 834.2 111.2 831.5 111.2H818.6C816.2 111.2 815 109.6 815 107.4V92.3H811.8C811.8 89 813.3 86.8 816 86.8Z" fill="#fff"/>
<circle cx="824" cy="93.8" r="3.05" fill="#fff"/>
<path d="M822.6 94L823.6 95L825.5 92.9" fill="none" stroke="#333" stroke-width="0.9"/>
<rect x="819.9" y="98" width="8.2" height="1.05" fill="#fff"/><rect x="821" y="100.05" width="6.2" height="1.05" fill="#fff"/><rect x="819.9" y="101.95" width="8.2" height="1.05" fill="#fff"/>
<path d="M900.8 94.6H903.9L909.6 109.8H923.9L929.9 94.6H933" fill="none" stroke="#fff" stroke-width="2.7" stroke-linejoin="miter" stroke-miterlimit="6"/>
<path d="M908.9 90L915.8 86.8L915 88.8C918.6 90.8 921.1 96 921 102.4C919.4 98.9 916.6 95.9 913 94.7L911.5 96.8Z" fill="#fff"/>
<path d="M988.7 87.8H994.2C994.8 87.2 995.2 86.8 996 86.8H1001.2C1002 86.8 1002.4 87.2 1003 87.8H1008.3V91H988.7Z" fill="#fff"/>
<path d="M990.5 92H1007V108.6C1007 110.2 1006 111.2 1004.4 111.2H993.1C991.5 111.2 990.5 110.2 990.5 108.6Z" fill="#fff"/>
</svg>
</body></html>
